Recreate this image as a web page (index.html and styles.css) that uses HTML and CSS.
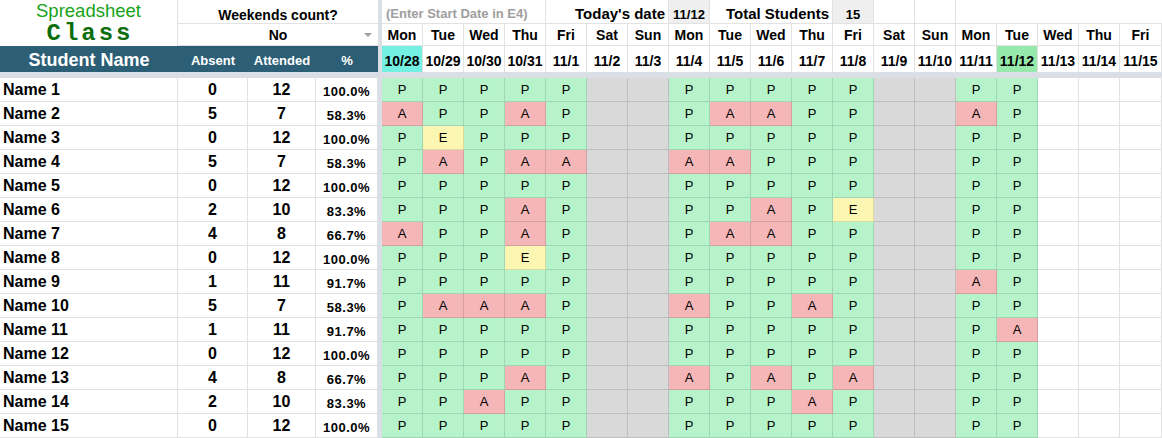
FILE: index.html
```html
<!DOCTYPE html>
<html lang="en">
<head>
<meta charset="utf-8">
<title>Spreadsheet Class</title>
<link rel="stylesheet" href="styles.css">
</head>
<body>
<div class="sheet">
  <div class="grid head">
    <div class="title">
      <span class="t1">Spreadsheet</span>
      <span class="t2">Class</span>
    </div>
    <div class="fzv"></div>

    <div class="wkq">Weekends count?</div>
    <div class="hint">(Enter Start Date in E4)</div>
    <div class="lbl span3">Today's date</div>
    <div class="val">11/12</div>
    <div class="lbl span3">Total Students</div>
    <div class="val">15</div>
    <div class="blank"></div>
    <div class="blank"></div>
    <div class="blank wide"></div>

    <div class="wkv">No<span class="dd"></span></div>
    <div class="day">Mon</div><div class="day">Tue</div><div class="day">Wed</div><div class="day">Thu</div><div class="day">Fri</div><div class="day">Sat</div><div class="day">Sun</div>
    <div class="day">Mon</div><div class="day">Tue</div><div class="day">Wed</div><div class="day">Thu</div><div class="day">Fri</div><div class="day">Sat</div><div class="day">Sun</div>
    <div class="day">Mon</div><div class="day">Tue</div><div class="day">Wed</div><div class="day">Thu</div><div class="day">Fri</div>

    <div class="hd hname">Student Name</div>
    <div class="hd hsm">Absent</div>
    <div class="hd hsm">Attended</div>
    <div class="hd hsm">%</div>
    <div class="date start">10/28</div><div class="date">10/29</div><div class="date">10/30</div><div class="date">10/31</div><div class="date">11/1</div><div class="date">11/2</div><div class="date">11/3</div>
    <div class="date">11/4</div><div class="date">11/5</div><div class="date">11/6</div><div class="date">11/7</div><div class="date">11/8</div><div class="date">11/9</div><div class="date">11/10</div>
    <div class="date">11/11</div><div class="date today">11/12</div><div class="date">11/13</div><div class="date">11/14</div><div class="date">11/15</div>
  </div>

  <div class="fzbar"></div>

  <div class="body">
    <div class="grid row"><span class="name">Name 1</span><span class="num">0</span><span class="num">12</span><span class="pct">100.0%</span><span class="fz"></span><span class="p">P</span><span class="p">P</span><span class="p">P</span><span class="p">P</span><span class="p">P</span><span class="w"></span><span class="w"></span><span class="p">P</span><span class="p">P</span><span class="p">P</span><span class="p">P</span><span class="p">P</span><span class="w"></span><span class="w"></span><span class="p">P</span><span class="p">P</span><span></span><span></span><span></span></div>
    <div class="grid row"><span class="name">Name 2</span><span class="num">5</span><span class="num">7</span><span class="pct">58.3%</span><span class="fz"></span><span class="a">A</span><span class="p">P</span><span class="p">P</span><span class="a">A</span><span class="p">P</span><span class="w"></span><span class="w"></span><span class="p">P</span><span class="a">A</span><span class="a">A</span><span class="p">P</span><span class="p">P</span><span class="w"></span><span class="w"></span><span class="a">A</span><span class="p">P</span><span></span><span></span><span></span></div>
    <div class="grid row"><span class="name">Name 3</span><span class="num">0</span><span class="num">12</span><span class="pct">100.0%</span><span class="fz"></span><span class="p">P</span><span class="e">E</span><span class="p">P</span><span class="p">P</span><span class="p">P</span><span class="w"></span><span class="w"></span><span class="p">P</span><span class="p">P</span><span class="p">P</span><span class="p">P</span><span class="p">P</span><span class="w"></span><span class="w"></span><span class="p">P</span><span class="p">P</span><span></span><span></span><span></span></div>
    <div class="grid row"><span class="name">Name 4</span><span class="num">5</span><span class="num">7</span><span class="pct">58.3%</span><span class="fz"></span><span class="p">P</span><span class="a">A</span><span class="p">P</span><span class="a">A</span><span class="a">A</span><span class="w"></span><span class="w"></span><span class="a">A</span><span class="a">A</span><span class="p">P</span><span class="p">P</span><span class="p">P</span><span class="w"></span><span class="w"></span><span class="p">P</span><span class="p">P</span><span></span><span></span><span></span></div>
    <div class="grid row"><span class="name">Name 5</span><span class="num">0</span><span class="num">12</span><span class="pct">100.0%</span><span class="fz"></span><span class="p">P</span><span class="p">P</span><span class="p">P</span><span class="p">P</span><span class="p">P</span><span class="w"></span><span class="w"></span><span class="p">P</span><span class="p">P</span><span class="p">P</span><span class="p">P</span><span class="p">P</span><span class="w"></span><span class="w"></span><span class="p">P</span><span class="p">P</span><span></span><span></span><span></span></div>
    <div class="grid row"><span class="name">Name 6</span><span class="num">2</span><span class="num">10</span><span class="pct">83.3%</span><span class="fz"></span><span class="p">P</span><span class="p">P</span><span class="p">P</span><span class="a">A</span><span class="p">P</span><span class="w"></span><span class="w"></span><span class="p">P</span><span class="p">P</span><span class="a">A</span><span class="p">P</span><span class="e">E</span><span class="w"></span><span class="w"></span><span class="p">P</span><span class="p">P</span><span></span><span></span><span></span></div>
    <div class="grid row"><span class="name">Name 7</span><span class="num">4</span><span class="num">8</span><span class="pct">66.7%</span><span class="fz"></span><span class="a">A</span><span class="p">P</span><span class="p">P</span><span class="a">A</span><span class="p">P</span><span class="w"></span><span class="w"></span><span class="p">P</span><span class="a">A</span><span class="a">A</span><span class="p">P</span><span class="p">P</span><span class="w"></span><span class="w"></span><span class="p">P</span><span class="p">P</span><span></span><span></span><span></span></div>
    <div class="grid row"><span class="name">Name 8</span><span class="num">0</span><span class="num">12</span><span class="pct">100.0%</span><span class="fz"></span><span class="p">P</span><span class="p">P</span><span class="p">P</span><span class="e">E</span><span class="p">P</span><span class="w"></span><span class="w"></span><span class="p">P</span><span class="p">P</span><span class="p">P</span><span class="p">P</span><span class="p">P</span><span class="w"></span><span class="w"></span><span class="p">P</span><span class="p">P</span><span></span><span></span><span></span></div>
    <div class="grid row"><span class="name">Name 9</span><span class="num">1</span><span class="num">11</span><span class="pct">91.7%</span><span class="fz"></span><span class="p">P</span><span class="p">P</span><span class="p">P</span><span class="p">P</span><span class="p">P</span><span class="w"></span><span class="w"></span><span class="p">P</span><span class="p">P</span><span class="p">P</span><span class="p">P</span><span class="p">P</span><span class="w"></span><span class="w"></span><span class="a">A</span><span class="p">P</span><span></span><span></span><span></span></div>
    <div class="grid row"><span class="name">Name 10</span><span class="num">5</span><span class="num">7</span><span class="pct">58.3%</span><span class="fz"></span><span class="p">P</span><span class="a">A</span><span class="a">A</span><span class="a">A</span><span class="p">P</span><span class="w"></span><span class="w"></span><span class="a">A</span><span class="p">P</span><span class="p">P</span><span class="a">A</span><span class="p">P</span><span class="w"></span><span class="w"></span><span class="p">P</span><span class="p">P</span><span></span><span></span><span></span></div>
    <div class="grid row"><span class="name">Name 11</span><span class="num">1</span><span class="num">11</span><span class="pct">91.7%</span><span class="fz"></span><span class="p">P</span><span class="p">P</span><span class="p">P</span><span class="p">P</span><span class="p">P</span><span class="w"></span><span class="w"></span><span class="p">P</span><span class="p">P</span><span class="p">P</span><span class="p">P</span><span class="p">P</span><span class="w"></span><span class="w"></span><span class="p">P</span><span class="a">A</span><span></span><span></span><span></span></div>
    <div class="grid row"><span class="name">Name 12</span><span class="num">0</span><span class="num">12</span><span class="pct">100.0%</span><span class="fz"></span><span class="p">P</span><span class="p">P</span><span class="p">P</span><span class="p">P</span><span class="p">P</span><span class="w"></span><span class="w"></span><span class="p">P</span><span class="p">P</span><span class="p">P</span><span class="p">P</span><span class="p">P</span><span class="w"></span><span class="w"></span><span class="p">P</span><span class="p">P</span><span></span><span></span><span></span></div>
    <div class="grid row"><span class="name">Name 13</span><span class="num">4</span><span class="num">8</span><span class="pct">66.7%</span><span class="fz"></span><span class="p">P</span><span class="p">P</span><span class="p">P</span><span class="a">A</span><span class="p">P</span><span class="w"></span><span class="w"></span><span class="a">A</span><span class="p">P</span><span class="a">A</span><span class="p">P</span><span class="a">A</span><span class="w"></span><span class="w"></span><span class="p">P</span><span class="p">P</span><span></span><span></span><span></span></div>
    <div class="grid row"><span class="name">Name 14</span><span class="num">2</span><span class="num">10</span><span class="pct">83.3%</span><span class="fz"></span><span class="p">P</span><span class="p">P</span><span class="a">A</span><span class="p">P</span><span class="p">P</span><span class="w"></span><span class="w"></span><span class="p">P</span><span class="p">P</span><span class="p">P</span><span class="a">A</span><span class="p">P</span><span class="w"></span><span class="w"></span><span class="p">P</span><span class="p">P</span><span></span><span></span><span></span></div>
    <div class="grid row"><span class="name">Name 15</span><span class="num">0</span><span class="num">12</span><span class="pct">100.0%</span><span class="fz"></span><span class="p">P</span><span class="p">P</span><span class="p">P</span><span class="p">P</span><span class="p">P</span><span class="w"></span><span class="w"></span><span class="p">P</span><span class="p">P</span><span class="p">P</span><span class="p">P</span><span class="p">P</span><span class="w"></span><span class="w"></span><span class="p">P</span><span class="p">P</span><span></span><span></span><span></span></div>
  </div>
</div>
</body>
</html>
```

FILE: styles.css
```css
* {
  box-sizing: border-box;
  margin: 0;
  padding: 0;
}

html, body {
  background: #ffffff;
}

body {
  margin: 0;
  font-family: "Liberation Sans", Arial, sans-serif;
  color: #000000;
  overflow: hidden;
}

.sheet {
  width: 1162px;
}

.grid {
  display: grid;
  grid-template-columns: 178px 70px 68px 62px 4px repeat(18, 41px) 42px;
}

/* ---------- header ---------- */
.head {
  grid-template-rows: 24px 22px 26px;
}

.head > div {
  display: flex;
  align-items: flex-end;
  justify-content: center;
  font-weight: bold;
  white-space: nowrap;
}

.title {
  grid-column: 1;
  grid-row: 1 / span 2;
  flex-direction: column;
  justify-content: flex-start !important;
  align-items: center !important;
  padding-top: 2px;
  border-right: 1px solid #e2e2e2;
}

.t1 {
  display: block;
  height: 19px;
  font-family: "Liberation Sans", Arial, sans-serif;
  font-weight: normal;
  font-size: 18.5px;
  line-height: 18px;
  color: #17a317;
}

.t2 {
  display: block;
  height: 25px;
  font-family: "Liberation Mono", "Courier New", monospace;
  font-weight: bold;
  font-size: 24px;
  line-height: 25px;
  letter-spacing: 3px;
  padding-left: 3px;
  color: #0b6e0b;
}

.fzv {
  grid-column: 5;
  grid-row: 1 / span 3;
  background: #dadfe6;
}

.wkq {
  grid-column: span 3;
  font-size: 14px;
  border-bottom: 1px solid #e2e2e2;
}

.hint {
  grid-column: span 4;
  justify-content: flex-start !important;
  padding: 0 0 2px 4px;
  font-size: 13px;
  color: #9e9e9e;
  border-right: 1px solid #e2e2e2;
  border-bottom: 1px solid #e2e2e2;
}

.lbl {
  font-size: 15px;
  justify-content: flex-end !important;
  padding: 0 3px 1px 0;
  border-right: 1px solid #e2e2e2;
  border-bottom: 1px solid #e2e2e2;
}

.span3 {
  grid-column: span 3;
}

.val {
  font-size: 13px;
  padding-bottom: 1px;
  background: #efefef;
  border-right: 1px solid #e2e2e2;
  border-bottom: 1px solid #e2e2e2;
}

.blank {
  border-right: 1px solid #e2e2e2;
  border-bottom: 1px solid #e2e2e2;
}

.blank.wide {
  grid-column: span 5;
  border-right: none;
}

.wkv {
  grid-column: span 3;
  position: relative;
  font-size: 14px;
  padding-bottom: 2px;
  border-bottom: 1px solid #e2e2e2;
}

.dd {
  position: absolute;
  right: 6px;
  top: 9px;
  width: 0;
  height: 0;
  border-left: 4px solid transparent;
  border-right: 4px solid transparent;
  border-top: 4px solid #9e9e9e;
}

.day {
  font-size: 14px;
  padding-bottom: 2px;
  border-right: 1px solid #e2e2e2;
  border-bottom: 1px solid #e2e2e2;
}

.hd {
  background: #2c5f76;
  color: #ffffff;
}

.hname {
  font-size: 18px;
  padding-bottom: 1px;
}

.hsm {
  font-size: 13px;
  padding-bottom: 4px;
}

.date {
  font-size: 14px;
  padding-bottom: 3px;
  border-right: 1px solid #e2e2e2;
}

.date.start {
  background: #74f0e2;
}

.date.today {
  background: #96e8ab;
}

.fzbar {
  height: 6px;
  background: #dadfe6;
}

/* ---------- body rows ---------- */
.row {
  height: 24px;
}

.row > span {
  display: flex;
  align-items: center;
  justify-content: center;
  font-size: 13px;
  border-right: 1px solid rgba(0, 0, 0, 0.12);
  border-bottom: 1px solid rgba(0, 0, 0, 0.12);
}

.row > .name {
  justify-content: flex-start;
  padding-left: 3px;
  font-size: 16px;
  font-weight: bold;
}

.row > .num {
  font-size: 16px;
  font-weight: bold;
}

.row > .pct {
  align-items: flex-end;
  padding-bottom: 2px;
  font-size: 13px;
  font-weight: bold;
  letter-spacing: 0.5px;
}

.row > .fz {
  background: #dadfe6;
  border: none;
}

.row > .p {
  background: #b6f3cb;
}

.row > .a {
  background: #f4b6b6;
}

.row > .e {
  background: #fbf7b2;
}

.row > .w {
  background: #d9d9d9;
}
```
